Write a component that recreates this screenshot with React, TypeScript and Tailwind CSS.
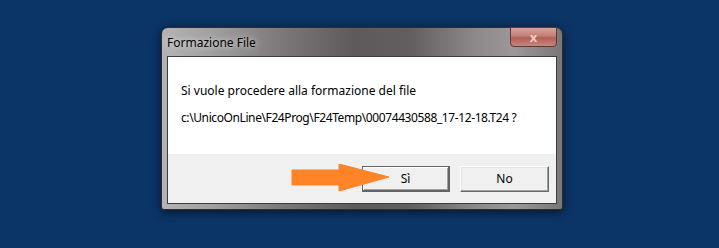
export default function App() {
  const font = { fontFamily: '"Noto Sans", "Open Sans", sans-serif' };
  return (
    <div className="h-[248px] w-[719px] overflow-hidden bg-[#0b3467] pl-[161px] pt-[27px]" style={font}>
      {/* Finestra di dialogo */}
      <div className="relative h-[183px] w-[402px] rounded-t-[7px] rounded-b-[3px] border border-[#2e2e30] bg-[linear-gradient(90deg,#b4b4b4_0%,#a2a0a1_12%,#7c787a_30%,#5e5a5c_48%,#625e60_62%,#8c8889_78%,#9c9899_88%,#7a7678_100%)] pb-[5px] pl-[5px] pr-[5px] pt-[28px] shadow-[0_2px_10px_rgba(0,0,0,0.6)]">
        <div className="absolute left-[5px] top-[7px] text-[12px] leading-[16px] text-black [text-shadow:0_0_6px_rgba(255,255,255,0.9)]">
          Formazione File
        </div>
        <div className="absolute right-[5px] top-[-1px] flex h-[20px] w-[47px] items-center justify-center rounded-b-[4px] border border-[#5a3a38] bg-[linear-gradient(180deg,#d8a49e_0%,#c37d76_45%,#b25e55_55%,#c8867e_100%)]">
          <span className="text-[13px] font-bold leading-none text-[#ecccc7]">x</span>
        </div>
        <div className="flex h-[148px] w-[390px] flex-col border border-[#3d3d3d] bg-white">
          <div className="flex h-[97px] flex-col pl-[13px] pt-[26px] text-[12px] leading-[16px] text-black">
            <p>Si vuole procedere alla formazione del file</p>
            <p className="mt-[11px] tracking-[-0.4px]">c:\UnicoOnLine\F24Prog\F24Temp\00074430588_17-12-18.T24 ?</p>
          </div>
          <div className="relative flex h-[49px] justify-end gap-[10px] bg-[#f0f0f0] pr-[7px] pt-[12px]">
            <button className="flex h-[26px] w-[88px] items-center justify-center border border-[#646464] border-b-2 border-r-2 bg-[#f0f0f0] text-[12px] text-black shadow-[inset_1px_1px_0_#ffffff,inset_-1px_-1px_0_#a0a0a0]">
              Sì
            </button>
            <button className="flex h-[26px] w-[89px] items-center justify-center border border-[#ffffff] border-b-[#696969] border-r-[#696969] bg-[#f0f0f0] text-[12px] text-black shadow-[inset_-1px_-1px_0_#a0a0a0,inset_1px_1px_0_#e3e3e3]">
              No
            </button>
            {/* Freccia arancione */}
            <svg className="absolute left-[123px] top-[10px]" width="99" height="28" viewBox="0 0 99 28">
              <path d="M1 6 H48 V0 L98 13 L48 27 V21 H1 Z" fill="#ff8427" stroke="#ff8427" strokeWidth="1" strokeLinejoin="round" />
            </svg>
          </div>
        </div>
      </div>
    </div>
  );
}
